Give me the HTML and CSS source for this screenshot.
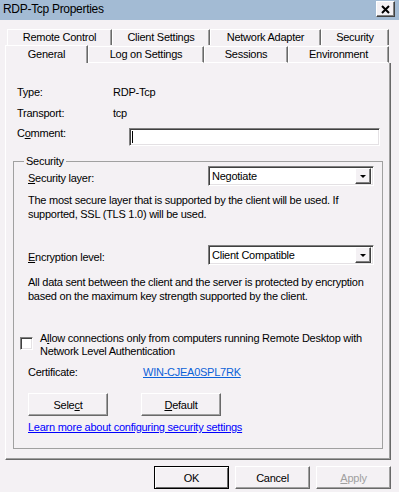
FILE: index.html
```html
<!DOCTYPE html>
<html>
    <head>
        <title>RDP-Tcp Properties</title>
        <link rel="stylesheet" href="styles.css">
    </head>
    <body>

        <div class="titlebar">
            <span class="title">RDP-Tcp Properties</span>
            <span class="close">
                <svg width="9" height="9" viewBox="0 0 9 9">
                    <path d="M1 1 L8 8 M8 1 L1 8" stroke="#000" stroke-width="2" fill="none"/>
                </svg>
            </span>
        </div>

        <div class="tabs">
            <div class="tab-row back">
                <div class="tab w-remote">Remote Control</div>
                <div class="tab w-client">Client Settings</div>
                <div class="tab w-network">Network Adapter</div>
                <div class="tab w-security">Security</div>
            </div>
            <div class="tab-row front">
                <div class="tab active w-general">General</div>
                <div class="tab w-logon">Log on Settings</div>
                <div class="tab w-sessions">Sessions</div>
                <div class="tab w-env">Environment</div>
            </div>
        </div>

        <div class="panel">

            <div class="info-row">
                <span class="info-label">Type:</span>
                <span>RDP-Tcp</span>
            </div>

            <div class="info-row">
                <span class="info-label">Transport:</span>
                <span>tcp</span>
            </div>

            <div class="info-row comment-row">
                <span class="info-label wide">C<u>o</u>mment:</span>
                <div class="textbox"><span class="caret"></span></div>
            </div>

            <fieldset class="group">
                <legend>Security</legend>

                <div class="field-row first">
                    <span class="field-label"><u>S</u>ecurity layer:</span>
                    <div class="combo">
                        <span class="combo-text">Negotiate</span>
                        <span class="combo-btn"><span class="arrow"></span></span>
                    </div>
                </div>

                <p class="desc">The most secure layer that is supported by the client will be used. If supported, SSL (TLS 1.0) will be used.</p>

                <div class="field-row enc-row">
                    <span class="field-label"><u>E</u>ncryption level:</span>
                    <div class="combo">
                        <span class="combo-text">Client Compatible</span>
                        <span class="combo-btn"><span class="arrow"></span></span>
                    </div>
                </div>

                <p class="desc desc-enc">All data sent between the client and the server is protected by encryption based on the maximum key strength supported by the client.</p>

                <div class="check-row">
                    <span class="checkbox"></span>
                    <span class="check-text">A<u>l</u>low connections only from computers running Remote Desktop with<br>Network Level Authentication</span>
                </div>

                <div class="cert-row">
                    <span class="cert-label">Certificate:</span>
                    <a class="cert-link">WIN-CJEA0SPL7RK</a>
                </div>

                <div class="group-buttons">
                    <div class="btn">Sele<u>c</u>t</div>
                    <div class="btn"><u>D</u>efault</div>
                </div>

                <a class="learn-link">Learn more about configuring security settings</a>
            </fieldset>

        </div>

        <div class="dialog-buttons">
            <div class="btn small default">OK</div>
            <div class="btn small">Cancel</div>
            <div class="btn small disabled"><u>A</u>pply</div>
        </div>

    </body>
</html>
```

FILE: styles.css
```css
*{
    margin: 0;
    padding: 0;
    box-sizing: border-box;
}

body, html{
    width: 399px;
    height: 492px;
    overflow: hidden;
}

body{
    background: #f4f1f4;
    font-family: "Liberation Sans", Arial, sans-serif;
    font-size: 11px;
    letter-spacing: -0.25px;
    color: #000;
}

/* title bar */
.titlebar{
    height: 20px;
    background: #a3bbd4;
    display: flex;
    justify-content: space-between;
    align-items: flex-start;
    padding-left: 3px;
}

.title{
    font-size: 12px;
    letter-spacing: -0.3px;
    line-height: 19px;
}

.close{
    margin-top: 1px;
    margin-right: 4px;
    width: 19px;
    height: 16px;
    background: #f4f1f4;
    border-top: 1px solid #fff;
    border-left: 1px solid #fff;
    border-right: 1px solid #404040;
    border-bottom: 1px solid #404040;
    box-shadow: inset -1px -1px #808080;
    display: flex;
    align-items: center;
    justify-content: center;
}

/* tabs */
.tabs{
    margin-top: 9px;
}

.tab-row{
    display: flex;
}

.tab-row.back{
    margin-left: 7px;
    height: 16px;
}

.tab-row.front{
    margin-left: 5px;
    height: 18px;
    align-items: flex-end;
}

.tab{
    border-top: 1px solid #fff;
    border-left: 1px solid #fff;
    border-right: 1px solid #696969;
    box-shadow: inset -1px 0 #a0a0a0;
    text-align: center;
    line-height: 15px;
}

.front .tab{
    height: 17px;
    border-bottom: 1px solid #fff;
    line-height: 15px;
}

.front .tab.active{
    height: 18px;
    border-bottom: none;
    line-height: 17px;
}

.w-remote{ width: 105px; }
.w-client{ width: 98px; }
.w-network{ width: 111px; }
.w-security{ width: 68px; }
.w-general{ width: 83px; }
.w-logon{ width: 116px; }
.w-sessions{ width: 84px; }
.w-env{ width: 101px; }

/* main page */
.panel{
    margin-left: 5px;
    width: 386px;
    height: 397px;
    border-left: 1px solid #fff;
    border-right: 1px solid #696969;
    border-bottom: 1px solid #696969;
    box-shadow: inset -1px -1px #a0a0a0;
    padding: 23px 7px 0 11px;
}

.info-row{
    display: flex;
    align-items: flex-start;
    line-height: 13px;
}

.info-row + .info-row{
    margin-top: 8px;
}

.info-row.comment-row{
    margin-top: 7px;
}

.info-label{
    width: 96px;
}

.info-label.wide{
    width: 112px;
}

.textbox{
    margin-top: 1px;
    width: 251px;
    height: 18px;
    background: #fff;
    border-top: 1px solid #808080;
    border-left: 1px solid #808080;
    border-right: 1px solid #fff;
    border-bottom: 1px solid #fff;
    box-shadow: inset 1px 1px #404040, inset -1px -1px #e4e1e4;
    padding: 2px 0 0 2px;
}

.caret{
    display: block;
    width: 1px;
    height: 12px;
    background: #000;
}

/* security group */
.group{
    margin: 9px 0 0 -4px;
    border: 1px solid #a0a0a0;
    padding: 0 7px 14px 14px;
}

.group legend{
    margin-left: -4px;
    padding: 0 2px;
    line-height: 12px;
}

.field-row{
    display: flex;
    align-items: center;
    height: 20px;
}

.field-row.first{
    margin-top: -1px;
}

.field-row.enc-row{
    margin-top: 24px;
}

.field-label{
    width: 180px;
    padding-top: 3px;
}

.combo{
    width: 166px;
    height: 20px;
    background: #fff;
    border-top: 1px solid #808080;
    border-left: 1px solid #808080;
    border-right: 1px solid #fff;
    border-bottom: 1px solid #fff;
    box-shadow: inset 1px 1px #404040, inset -1px -1px #e4e1e4;
    display: flex;
    align-items: center;
    padding: 0 2px 0 3px;
}

.combo-text{
    flex: 1;
}

.combo-btn{
    width: 16px;
    height: 16px;
    background: #f4f1f4;
    border-top: 1px solid #fff;
    border-left: 1px solid #fff;
    border-right: 1px solid #404040;
    border-bottom: 1px solid #404040;
    box-shadow: inset -1px -1px #808080;
    display: flex;
    align-items: center;
    justify-content: center;
}

.arrow{
    width: 0;
    height: 0;
    border-left: 3px solid transparent;
    border-right: 3px solid transparent;
    border-top: 3px solid #000;
}

.desc{
    margin-top: 7px;
    margin-right: -4px;
    line-height: 14px;
}

.desc.desc-enc{
    margin-top: 10px;
}

.check-row{
    display: flex;
    align-items: flex-start;
    margin: 29px -4px 0 -8px;
    line-height: 13px;
}

.checkbox{
    flex: none;
    width: 13px;
    height: 13px;
    margin-top: 5px;
    margin-right: 7px;
    background: #fff;
    border-top: 1px solid #808080;
    border-left: 1px solid #808080;
    border-right: 1px solid #fff;
    border-bottom: 1px solid #fff;
    box-shadow: inset 1px 1px #404040, inset -1px -1px #e4e1e4;
}

.cert-row{
    display: flex;
    margin-top: 8px;
    line-height: 13px;
}

.cert-label{
    width: 115px;
}

.cert-link{
    color: #0b61d8;
    text-decoration: underline;
}

.group-buttons{
    display: flex;
    gap: 33px;
    margin-top: 14px;
}

.learn-link{
    display: block;
    margin-top: 5px;
    line-height: 13px;
    color: #0000ff;
    text-decoration: underline;
}

/* buttons */
.btn{
    width: 80px;
    height: 23px;
    background: #f4f1f4;
    border-top: 1px solid #fff;
    border-left: 1px solid #fff;
    border-right: 1px solid #696969;
    border-bottom: 1px solid #696969;
    box-shadow: inset -1px -1px #a0a0a0;
    display: flex;
    align-items: center;
    justify-content: center;
}

.btn.small{
    width: 75px;
}

.btn.default{
    border: 1px solid #000;
    box-shadow: inset 1px 1px #fff, inset -1px -1px #696969;
}

.btn.disabled{
    color: #a0a0a0;
}

.dialog-buttons{
    display: flex;
    justify-content: flex-end;
    gap: 6px;
    margin-top: 6px;
    padding-right: 8px;
}
```
